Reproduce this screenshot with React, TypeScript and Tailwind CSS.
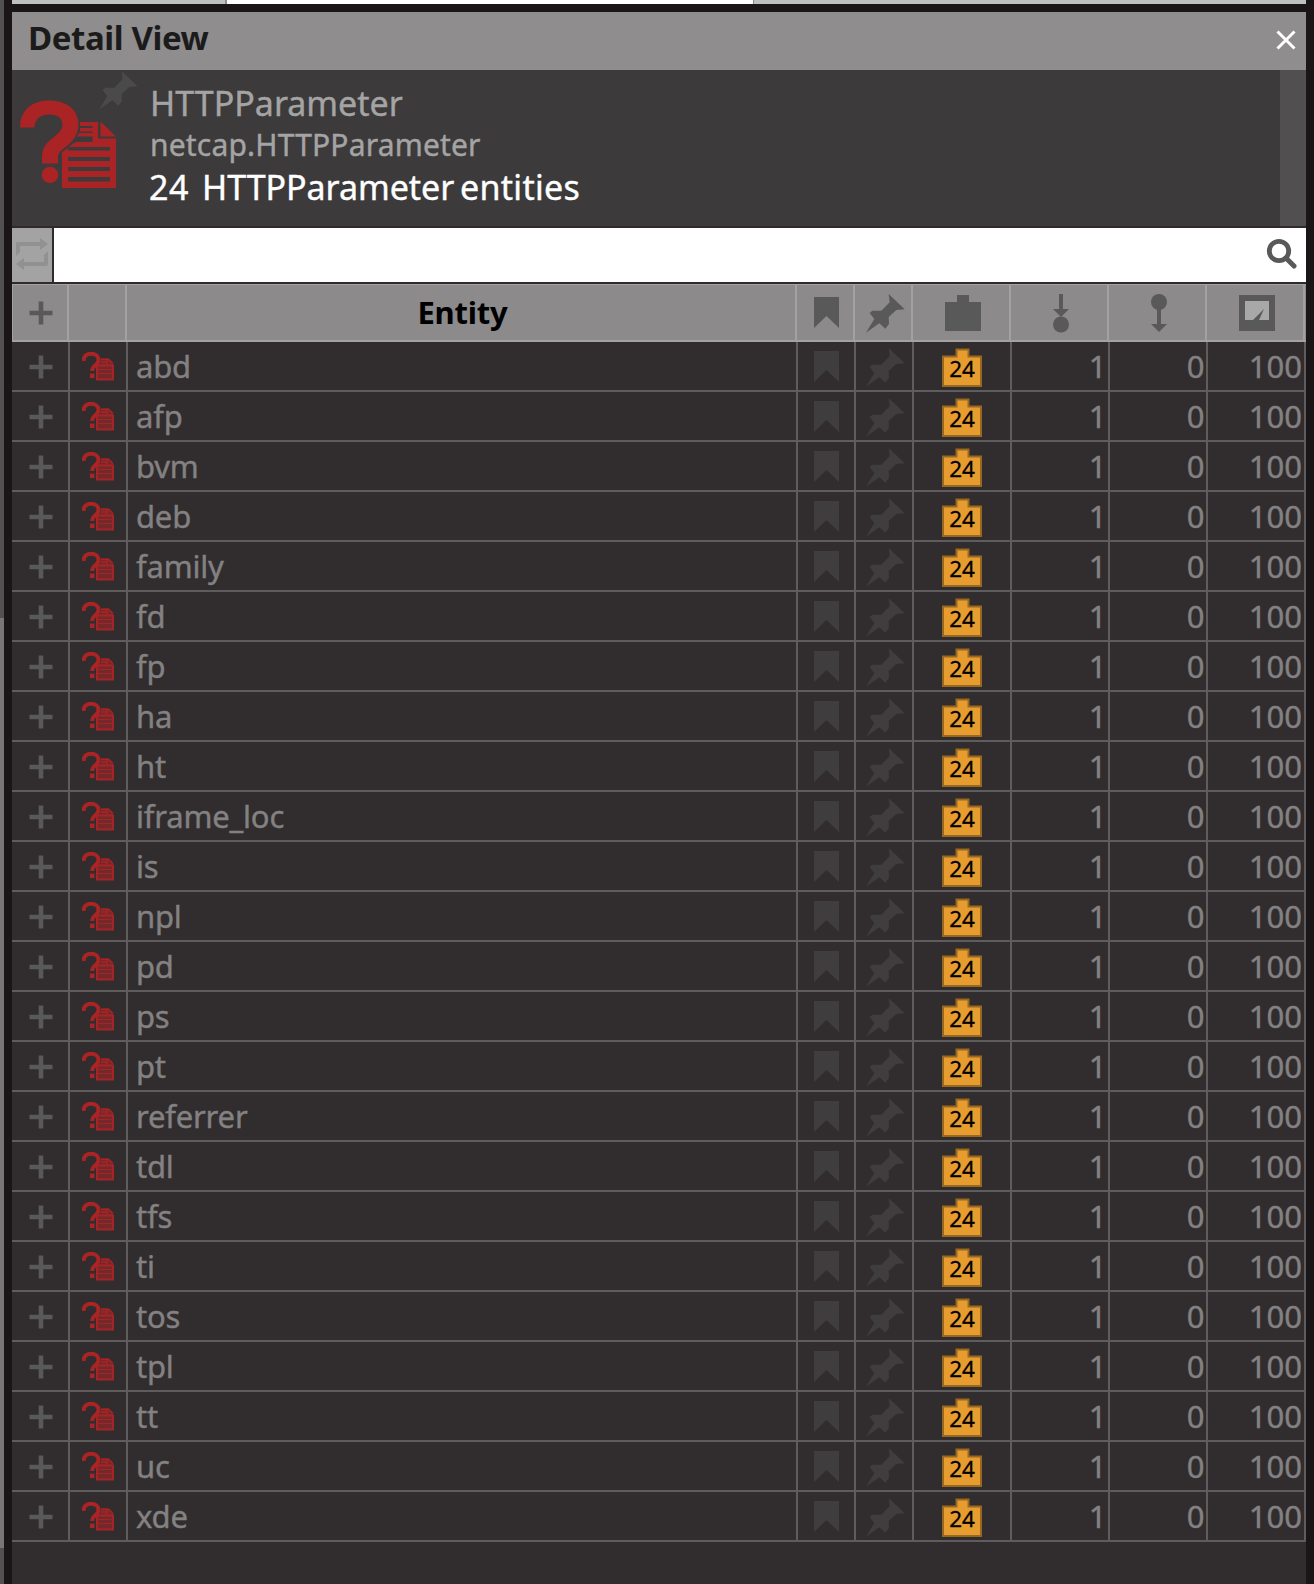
import React from "react";

const entities = [
  "abd", "afp", "bvm", "deb", "family", "fd", "fp", "ha", "ht", "iframe_loc", "is", "npl",
  "pd", "ps", "pt", "referrer", "tdl", "tfs", "ti", "tos", "tpl", "tt", "uc", "xde",
];

function Plus() {
  return (
    <svg className="block h-6 w-6" viewBox="0 0 24 24">
      <path d="M9.700 0.500h4.600v9.200h9.200v4.600H14.300v9.200h-4.600V14.300H0.500v-4.600H9.700z" fill="#595959" />
    </svg>
  );
}

function ParamIconLarge() {
  return (
    <svg className="block h-[88px] w-24" viewBox="20 100 96 88" fill="#aa2325">
      <path d="M20 127.500C20 111 31 100.500 49 100.500C67 100.500 78.500 110 78.500 124.500C78.500 134 74 140 68 145C61 150.500 58 152 58 158V163.500H42V157C42 149 45 144 51 139.500C58 134 62.500 130 62.500 124.500C62.500 118 57 114.500 49.500 114.500C41 114.500 34.500 119 34.500 127.500Z" />
      <circle cx="50" cy="175" r="8.300" />
      <path d="M80 122H98V142H92.500V136.500H77L79 133H92.500V131.500H80V128H92.500V126H80Z" />
      <path d="M100.500 121.500L116 136.500H100.500Z" />
      <path
        fillRule="evenodd"
        d="M76 142H98V138.500H116V188H62V152L68 148L72 144ZM68 147V150.500H110V147ZM68 157V161H110V157ZM68 167V171H110V167ZM68 177V181.500H110V177Z"
      />
    </svg>
  );
}

function ParamIconSmall() {
  return (
    <svg className="block h-[29px] w-8" viewBox="0 0 32 29">
      <path d="M1.500 9C1.500 4 5 1.800 9 1.800C13.500 1.800 16.500 4.200 16.500 8C16.500 13.500 10.200 12.500 10.200 19" fill="none" stroke="#aa2325" strokeWidth="4" />
      <path d="M8 21.500H12.500V26H8Z" fill="#aa2325" />
      <path d="M19 6.500H27L31 11V13H17Z" fill="#75282a" />
      <path d="M19 7.200H26.500L31 11.500M25 7V12M19 10H24" fill="none" stroke="#aa2325" strokeWidth="1.600" />
      <path d="M15 13.500H31V27.500H15Z" fill="#75282a" stroke="#a62426" strokeWidth="2" />
      <path d="M15 17.500H31M15 21.500H31" stroke="#a02527" strokeWidth="1.200" />
    </svg>
  );
}

function Bookmark({ fill }: { fill: string }) {
  return (
    <svg className="block h-[31px] w-[25px]" viewBox="0 0 25 31">
      <path d="M0 0H25V31L12.500 19L0 31Z" fill={fill} />
    </svg>
  );
}

function Pin({ fill }: { fill: string }) {
  return (
    <svg className="block h-[39px] w-[39px] shrink-0" viewBox="0 0 117 117">
      <path d="M0 116L25 75L11 57L19 50H46L71 25L68 0L116 46L91 48L68 69L69 90L58 104L40 88Z" fill={fill} />
    </svg>
  );
}

function Head({ children, className }: { children?: React.ReactNode; className?: string }) {
  return <div className={"flex justify-center border-r-2 border-[#a3a2a3] " + (className ?? "")}>{children}</div>;
}

function Cell({ children, className }: { children?: React.ReactNode; className?: string }) {
  return <div className={"flex border-r-2 border-[#5e5c5d] " + (className ?? "")}>{children}</div>;
}

function Header() {
  return (
    <div className="grid h-[58px] grid-cols-[57px_58px_670px_58px_58px_98px_98px_98px_98px] border-t border-b-2 border-[#a3a2a3] bg-[#8c8a8b]">
      <Head className="border-l pt-4 pl-[2px]"><Plus /></Head>
      <Head />
      <Head className="pl-[3px] text-[31px] font-bold leading-[54px] text-black">
        <span className="tracking-[-0.2px]">Entity</span>
      </Head>
      <Head className="pt-3 pl-[3px]"><Bookmark fill="#595959" /></Head>
      <Head className="pt-[9px] pl-[4px]"><Pin fill="#595959" /></Head>
      <Head className="pt-[10px] pl-[3px]">
        <svg className="h-9 w-9" viewBox="0 0 36 36"><path d="M0 7H12V0H24V7H36V36H0Z" fill="#595959" /></svg>
      </Head>
      <Head className="pt-[9px] pl-[3px]">
        <svg className="h-[39px] w-4" viewBox="0 0 16 39" fill="#595959"><path d="M6 0H10V15H16L8 23L0 15H6Z" /><circle cx="8" cy="30.500" r="8" /></svg>
      </Head>
      <Head className="pt-[9px] pl-[3px]">
        <svg className="h-[39px] w-4" viewBox="0 0 16 39" fill="#595959"><path d="M6 12H10V30H16L8 38L0 30H6Z" /><circle cx="8" cy="8" r="8" /></svg>
      </Head>
      <Head className="pt-[10px] pl-[3px]">
        <svg className="h-9 w-9" viewBox="0 0 36 36"><path d="M0 0H36V36H0Z" fill="#595959" /><path d="M6 6H30V25H6Z" fill="#a8a8a8" /><path d="M14 25L25 14L20 25Z" fill="#595959" /></svg>
      </Head>
    </div>
  );
}

function Row({ name }: { name: string }) {
  return (
    <div className="grid h-[50px] grid-cols-[58px_58px_670px_58px_58px_98px_98px_98px_98px] border-b-2 border-[#5e5c5d] bg-[#312d2e] text-[31px] leading-[48px] text-[#838182] [-webkit-text-stroke:0.4px_#838182]">
      <Cell className="pt-[13px] pl-[17px]"><Plus /></Cell>
      <Cell className="pt-[10px] pl-3"><ParamIconSmall /></Cell>
      <Cell className="pl-[8px] tracking-[-0.2px]">{name}</Cell>
      <Cell className="pt-[9px] pl-4"><Bookmark fill="#3f3d3e" /></Cell>
      <Cell className="pt-[6px] pl-[10px]"><Pin fill="#3f3d3e" /></Cell>
      <Cell className="pt-[6px] pl-7">
        <div className="relative h-[39px] w-10">
          <svg className="block h-[39px] w-10" viewBox="0 0 40 39"><path d="M1 8.500H14.500V1.500H26.500V8.500H39V38H1Z" fill="#e69c2f" stroke="#986820" strokeWidth="2" /></svg>
          <span className="absolute inset-x-0 top-[5px] text-center text-[22.500px] leading-[32px] text-black [-webkit-text-stroke:0.3px_black]">24</span>
        </div>
      </Cell>
      <Cell className="justify-end pr-[1.500px]">1</Cell>
      <Cell className="justify-end pr-[1.500px]">0</Cell>
      <Cell className="justify-end pr-[2px]">100</Cell>
    </div>
  );
}

export default function App() {
  return (
    <div className="flex h-[1584px] w-[1314px] overflow-hidden bg-[#1a1617] font-['Noto_Sans',sans-serif]">
      <div className="flex w-1 flex-col bg-[#525051]">
        <div className="h-[618px]" />
        <div className="h-[930px] bg-[#777576]" />
      </div>
      <div className="ml-2 flex w-[1294px] flex-col">
        <div className="mb-2 flex h-1 bg-[#bec2bf]">
          <div className="w-[215px] border-r-2 border-[#8c8c8c]" />
          <div className="w-[527px] border-r border-[#8c8c8c] bg-white" />
        </div>
        <div className="flex h-[58px] justify-between bg-[#8f8d8e] pl-4 pr-[10px]">
          <h1 className="text-[33px] font-bold leading-[52px] tracking-[-0.4px] text-[#1c1b1b]">Detail View</h1>
          <svg className="mt-[18px] h-5 w-5" viewBox="0 0 20 20"><path d="M1.500 1.500L18.500 18.500M18.500 1.500L1.500 18.500" stroke="#fff" strokeWidth="3" /></svg>
        </div>
        <div className="flex h-[158px] border-b-2 border-[#2f2b2d] bg-[#3c3a3b]">
          <div className="relative w-[138px] shrink-0 pl-2 pt-[30px]">
            <ParamIconLarge />
            <div className="absolute left-[87px] top-px"><Pin fill="#4b4a4a" /></div>
          </div>
          <div className="flex grow flex-col whitespace-nowrap pt-3 text-[#a5a4a4] [-webkit-text-stroke:0.4px]">
            <div className="text-[34px] leading-[42px]">HTTPParameter</div>
            <div className="text-[30px] leading-[42px] tracking-[0.18px]">netcap.HTTPParameter</div>
            <div className="-ml-px flex text-[34px] leading-[42px] text-white">
              <span className="w-[53px] tracking-[0.5px]">24</span>
              <span className="w-[258px] tracking-[-0.05px]">HTTPParameter</span>
              <span className="tracking-[0.3px]">entities</span>
            </div>
          </div>
          <div className="w-[26px] bg-[#514f50]" />
        </div>
        <div className="flex h-14 border-b-2 border-[#2f2b2d] bg-white">
          <div className="w-[42px] border-r-2 border-[#2f2b2d] bg-[#a3a3a3] pl-1 pt-[10px]">
            <svg className="h-8 w-8" viewBox="0 0 32 32" fill="#919191"><path d="M0 18V5Q0 4 2 4H24V0L32 6L24 12V8H4V14ZM32 13V26Q32 28 30 28H8V32L0 26L8 20V24H28V17Z" /></svg>
          </div>
          <div className="flex grow justify-end pr-[9px] pt-[10px]">
            <svg className="h-[31px] w-[31px]" viewBox="0 0 31 31" fill="none" stroke="#595959"><circle cx="13" cy="13" r="9.700" strokeWidth="4.800" /><path d="M20 20L28 28" strokeWidth="5" strokeLinecap="round" /></svg>
          </div>
        </div>
        <Header />
        {entities.map((name) => <Row key={name} name={name} />)}
        <div className="grow bg-[#312d2e]" />
      </div>
    </div>
  );
}
